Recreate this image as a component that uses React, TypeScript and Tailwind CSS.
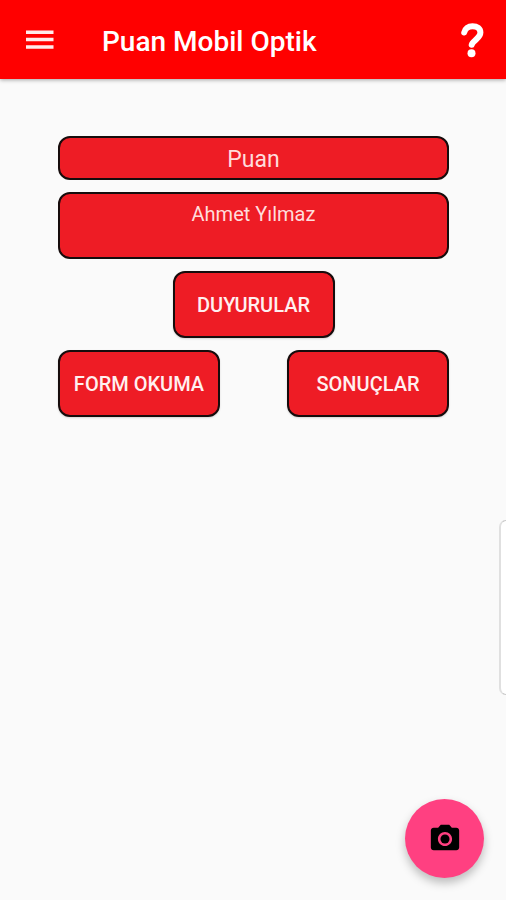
import React from "react";

function MenuIcon() {
  return (
    <svg viewBox="0 0 36 36" className="size-9" fill="#fff" fillOpacity="0.92" aria-hidden="true">
      <path d="M4 8.500h27.500v3.500H4zM4 15.700h27.500v3.500H4zM4 23.200h27.500v3.500H4z" />
    </svg>
  );
}

function HelpIcon() {
  return (
    <svg viewBox="0 0 24 36" className="h-9 w-6" fill="none" aria-hidden="true">
      <path
        d="M4.200 10.500C5 6.500 8.300 4.200 12.500 4.200c4.800 0 7.900 2.500 7.900 6.400 0 3-1.700 4.700-4.300 7-2.400 2.100-4 3.300-4.400 5.200"
        stroke="#fff"
        strokeWidth="6"
        strokeLinecap="round"
        strokeLinejoin="round"
      />
      <circle cx="11.500" cy="31.200" r="4" fill="#fff" />
    </svg>
  );
}

function CameraIcon() {
  return (
    <svg viewBox="0 0 24 24" className="size-[34px]" fill="#000" aria-hidden="true">
      <circle cx="12" cy="12" r="3.200" />
      <path d="M9 2 7.170 4H4c-1.100 0-2 .9-2 2v12c0 1.100.9 2 2 2h16c1.100 0 2-.9 2-2V6c0-1.100-.9-2-2-2h-3.170L15 2H9zm3 15c-2.760 0-5-2.240-5-5s2.240-5 5-5 5 2.240 5 5-2.240 5-5 5z" />
    </svg>
  );
}

function ActionButton({ children }: { children: React.ReactNode }) {
  return (
    <button
      type="button"
      className="h-[67px] w-[162px] rounded-xl border-2 border-[#160c0c] bg-[#ee1c25] text-[20px] font-medium leading-6 text-[#fff0f0] shadow-[0_1px_2px_rgba(0,0,0,0.15)]"
    >
      {children}
    </button>
  );
}

export default function App() {
  return (
    <div className="min-h-screen bg-[#fafafa] font-[Roboto,sans-serif]">
      <header className="flex h-[79px] items-center bg-[#ff0000] px-[22px] shadow-[0_1px_4px_rgba(0,0,0,0.35)]">
        <button type="button" aria-label="Menü">
          <MenuIcon />
        </button>
        <h1 className="ml-11 flex-1 pt-1 text-[28px] font-medium leading-8 text-white">Puan Mobil Optik</h1>
        <button type="button" aria-label="Yardım">
          <HelpIcon />
        </button>
      </header>

      <main className="flex flex-col gap-3 pl-[58px] pr-[57px] pt-[57px]">
        <section className="flex h-11 items-center justify-center rounded-xl border-2 border-[#160c0c] bg-[#ee1c25] pt-1 text-[23px] leading-7 text-[#ffdcdc]">
          Puan
        </section>
        <section className="h-[67px] rounded-xl border-2 border-[#160c0c] bg-[#ee1c25] pt-2 text-center text-[20px] leading-6 text-[#ffdcdc]">
          Ahmet Yılmaz
        </section>
        <div className="flex justify-center">
          <ActionButton>DUYURULAR</ActionButton>
        </div>
        <div className="flex justify-between">
          <ActionButton>FORM OKUMA</ActionButton>
          <ActionButton>SONUÇLAR</ActionButton>
        </div>
      </main>

      <aside
        aria-label="Kenar paneli"
        className="fixed right-0 top-[520px] h-[175px] w-[7px] rounded-l-[7px] border-y border-l-2 border-y-[#c8c8c8] border-l-[#e0e0e0] bg-white"
      />

      <button
        type="button"
        aria-label="Kamera"
        className="fixed bottom-[22px] right-[22px] flex size-[79px] items-center justify-center rounded-full bg-[#ff4081] shadow-[0_5px_10px_rgba(0,0,0,0.25)]"
      >
        <CameraIcon />
      </button>
    </div>
  );
}
